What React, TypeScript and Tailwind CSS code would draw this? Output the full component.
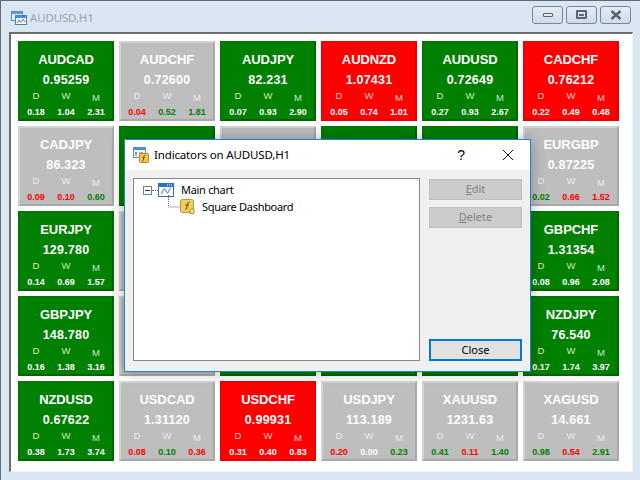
import React from 'react';

type Tone = 'green' | 'red' | 'gray';

interface TileData {
  tone: Tone;
  name?: string;
  price?: string;
  values?: [string, string, string];
  colors?: string;
}

const tiles: TileData[] = [
  { tone: 'green', name: 'AUDCAD', price: '0.95259', values: ['0.18', '1.04', '2.31'] },
  { tone: 'gray', name: 'AUDCHF', price: '0.72600', values: ['0.04', '0.52', '1.81'], colors: 'rgg' },
  { tone: 'green', name: 'AUDJPY', price: '82.231', values: ['0.07', '0.93', '2.90'] },
  { tone: 'red', name: 'AUDNZD', price: '1.07431', values: ['0.05', '0.74', '1.01'] },
  { tone: 'green', name: 'AUDUSD', price: '0.72649', values: ['0.27', '0.93', '2.67'] },
  { tone: 'red', name: 'CADCHF', price: '0.76212', values: ['0.22', '0.49', '0.48'] },

  { tone: 'gray', name: 'CADJPY', price: '86.323', values: ['0.09', '0.10', '0.60'], colors: 'rrg' },
  { tone: 'green' },
  { tone: 'gray' },
  { tone: 'green' },
  { tone: 'green' },
  { tone: 'gray', name: 'EURGBP', price: '0.87225', values: ['0.02', '0.66', '1.52'], colors: 'grr' },

  { tone: 'green', name: 'EURJPY', price: '129.780', values: ['0.14', '0.69', '1.57'] },
  { tone: 'gray' },
  { tone: 'gray' },
  { tone: 'green' },
  { tone: 'green' },
  { tone: 'green', name: 'GBPCHF', price: '1.31354', values: ['0.08', '0.96', '2.08'] },

  { tone: 'green', name: 'GBPJPY', price: '148.780', values: ['0.16', '1.38', '3.16'] },
  { tone: 'gray' },
  { tone: 'green' },
  { tone: 'green' },
  { tone: 'green' },
  { tone: 'green', name: 'NZDJPY', price: '76.540', values: ['0.17', '1.74', '3.97'] },

  { tone: 'green', name: 'NZDUSD', price: '0.67622', values: ['0.38', '1.73', '3.74'] },
  { tone: 'gray', name: 'USDCAD', price: '1.31120', values: ['0.08', '0.10', '0.36'], colors: 'rgr' },
  { tone: 'red', name: 'USDCHF', price: '0.99931', values: ['0.31', '0.40', '0.83'] },
  { tone: 'gray', name: 'USDJPY', price: '113.189', values: ['0.20', '0.00', '0.23'], colors: 'rwg' },
  { tone: 'gray', name: 'XAUUSD', price: '1231.63', values: ['0.41', '0.11', '1.40'], colors: 'grg' },
  { tone: 'gray', name: 'XAGUSD', price: '14.661', values: ['0.98', '0.54', '2.91'], colors: 'grg' },
];

const toneClass: Record<Tone, string> = {
  green: 'bg-[#008000] border-t-[#007800] border-l-[#007800] border-r-[#006400] border-b-[#006400]',
  red: 'bg-[#ff0000] border-t-[#f00000] border-l-[#f00000] border-r-[#e60000] border-b-[#e60000]',
  gray: 'bg-[#bebebe] border-t-[#d3d3d3] border-l-[#d3d3d3] border-r-[#a9a9a9] border-b-[#a9a9a9]',
};

const labelClass: Record<Tone, string[]> = {
  green: ['text-[#e2eeb0]', 'text-[#cdeeb8]', 'text-[#c0ecd8]'],
  red: ['text-[#ffc8c0]', 'text-[#ffc8c0]', 'text-[#ffc8c8]'],
  gray: ['text-[#ececec]', 'text-[#ececec]', 'text-[#ececec]'],
};

const valueClass: Record<string, string> = {
  r: 'text-[#ff0000]',
  g: 'text-[#008000]',
  w: 'text-white',
};

const Tile: React.FC<{ tile: TileData }> = ({ tile }) => (
  <div className={`h-20 border-2 flex flex-col items-center pt-[9px] font-['Liberation_Sans',sans-serif] text-white ${toneClass[tile.tone]}`}>
    {tile.name && (
      <>
        <div className="text-[13px] leading-[15px] font-bold tracking-[-0.1px]">{tile.name}</div>
        <div className="mt-[6px] text-[12.5px] leading-[15px] font-bold tracking-[0.2px]">{tile.price}</div>
        <div className="mt-[2px] w-full px-[1px] grid grid-cols-3 text-center text-[9.5px] leading-[11px]">
          <span className={labelClass[tile.tone][0]}>D</span>
          <span className={labelClass[tile.tone][1]}>W</span>
          <span className={`mt-[2px] ${labelClass[tile.tone][2]}`}>M</span>
        </div>
        <div className="mt-[4px] w-full px-[1px] grid grid-cols-3 text-center text-[9px] leading-[11px] font-bold">
          {tile.values?.map((v, i) => (
            <span key={i} className={tile.colors ? valueClass[tile.colors[i]] : 'text-white'}>{v}</span>
          ))}
        </div>
      </>
    )}
  </div>
);

const WinButton: React.FC<{ children: React.ReactNode }> = ({ children }) => (
  <div className="w-[31px] h-[18px] rounded-[3px] border border-[#76879c] bg-gradient-to-b from-[#e4edf6] to-[#cfdbe8] flex items-center justify-center">
    {children}
  </div>
);

const ChartIcon = () => (
  <svg width="16" height="16" viewBox="0 0 16 16" className="shrink-0">
    <rect x="0.5" y="1.5" width="11" height="9" fill="#e4eefa" stroke="#5b8fc7" />
    <rect x="1" y="2" width="10" height="2" fill="#5b9bd9" />
    <rect x="4.5" y="5.5" width="11" height="9" fill="#f6faff" stroke="#4a7fb8" />
    <rect x="5" y="6" width="10" height="2" fill="#4a8fd6" />
    <path d="M6 13l2-3 2 2 2-3 2 3" fill="none" stroke="#6b7f95" strokeWidth="1" />
  </svg>
);

const DialogIcon = () => (
  <svg width="16" height="16" viewBox="0 0 16 16" className="shrink-0">
    <rect x="0.5" y="0.5" width="12" height="10" fill="#eef4fb" stroke="#5b8fc7" />
    <rect x="1" y="1" width="11" height="2" fill="#4a8fd6" />
    <path d="M3 5v4M2 6h2M6 6h4M6 8h4" stroke="#607080" strokeWidth="1" />
    <rect x="6.5" y="6.5" width="9" height="9" rx="1" fill="#f2c94c" stroke="#b08a20" />
    <path d="M12.5 8.5c-1.5-.5-1.6.6-1.8 2l-.4 2.5c-.2 1-.8 1-1.3.8M9.500 10.500h2.500" fill="none" stroke="#6b5200" strokeWidth="1" />
  </svg>
);

const MainChartIcon = () => (
  <svg width="16" height="14" viewBox="0 0 16 14" className="shrink-0">
    <rect x="0.5" y="0.5" width="15" height="13" fill="#fff" stroke="#2f6fd0" />
    <rect x="1" y="1" width="14" height="3" fill="#2f6fd0" />
    <path d="M9 2h1M11 2h1M13 2h1" stroke="#fff" strokeWidth="1" />
    <path d="M3 11c1.500 0 1.500-5 3.500-5s1.500 4 3 4 1.500-5 3.500-5" fill="none" stroke="#8fa6c8" strokeWidth="1.500" />
  </svg>
);

const IndicatorIcon = () => (
  <svg width="16" height="16" viewBox="0 0 16 16" className="shrink-0">
    <rect x="0.5" y="0.5" width="13" height="13" rx="2" fill="#f0cd5c" stroke="#b8983a" />
    <path d="M9.500 3.500c-1.800-.6-2 .6-2.200 2l-.6 3.500c-.2 1.200-.8 1.300-1.500 1M5.500 6h3.500" fill="none" stroke="#5c4700" strokeWidth="1" />
    <path d="M12 9.500l2.500 2-1 3h-3l-1-3z" fill="#f6e08a" stroke="#a98a2c" />
  </svg>
);

const DialogButton: React.FC<{ first: string; rest: string }> = ({ first, rest }) => (
  <div className="h-[21px] bg-[#cccccc] border border-[#bfbfbf] flex items-center justify-center text-[11px] text-[#838383]">
    <span className="underline">{first}</span>
    {rest}
  </div>
);

export default function App() {
  return (
    <div className="relative w-[640px] h-[480px] overflow-hidden flex flex-col bg-[#dae6f2] border-t border-l border-[#5f6b78] font-['Noto_Sans',sans-serif]">
      {/* Title bar */}
      <div className="h-[31px] shrink-0 flex items-center pl-[10px] pr-[9px] pt-[2px]">
        <ChartIcon />
        <span className="ml-[3px] text-[11.5px] tracking-[-0.15px] text-[#9aa3ad]">AUDUSD,H1</span>
        <div className="ml-auto flex gap-[3px] -mt-[6px]">
          <WinButton>
            <div className="w-[10px] h-[4px] bg-[#e8e8e8] border border-[#5c6570] rounded-[1px]" />
          </WinButton>
          <WinButton>
            <div className="w-[11px] h-[9px] border-2 border-[#5c6570] rounded-[1px] flex items-center justify-center">
              <div className="w-[5px] h-[2px] bg-[#5c6570]" />
            </div>
          </WinButton>
          <WinButton>
            <svg width="12" height="10" viewBox="0 0 12 10">
              <path d="M1.500 1l9 8M10.500 1l-9 8" stroke="#5c6570" strokeWidth="2.500" />
            </svg>
          </WinButton>
        </div>
      </div>

      {/* Chart area */}
      <div className="ml-[8px] mr-[7px] mb-[8px] h-[441px] bg-white border-t-2 border-l-2 border-t-[#6d6d6d] border-l-[#6d6d6d] border-b border-r border-b-[#f4f4f4] border-r-[#f4f4f4] pl-[7px] pt-[7px]">
        <div className="grid grid-cols-[repeat(6,96px)] auto-rows-[80px] gap-[5px]">
          {tiles.map((t, i) => (
            <Tile key={i} tile={t} />
          ))}
        </div>
      </div>

      {/* Indicators dialog */}
      <div className="absolute left-[123px] top-[138px] w-[407px] h-[233px] flex flex-col bg-[#f0f0f0] border border-[#1a84d8] shadow-[0_0_14px_rgba(0,0,0,0.3)]">
        <div className="h-[30px] shrink-0 bg-white flex items-center pl-[8px] text-[#000]">
          <DialogIcon />
          <span className="ml-[5px] text-[11.5px] tracking-[-0.15px]">Indicators on AUDUSD,H1</span>
          <span className="ml-auto mr-[37px] text-[14px] font-['Liberation_Sans',sans-serif]">?</span>
          <svg width="12" height="12" viewBox="0 0 12 12" className="mr-[16px]">
            <path d="M1 1l10 10M11 1L1 11" stroke="#111" strokeWidth="1" />
          </svg>
        </div>
        <div className="flex-1 flex pt-[8px] pl-[8px] pr-[7px] pb-[10px] gap-[9px]">
          <div className="w-[287px] bg-white border border-[#828790] pt-[3px] pl-[9px] text-[11px] tracking-[-0.3px] text-[#000]">
            <div className="flex items-center h-[16px]">
              <div className="w-[9px] h-[9px] border border-[#808080] flex items-center justify-center">
                <div className="w-[5px] h-px bg-[#333]" />
              </div>
              <div className="w-[6px] border-t border-dotted border-[#666]" />
              <MainChartIcon />
              <span className="ml-[7px]">Main chart</span>
            </div>
            <div className="flex items-center h-[18px] ml-[25px]">
              <svg width="12" height="18" viewBox="0 0 12 18" className="shrink-0 -mt-[6px]">
                <path d="M0.500 0v12h12" fill="none" stroke="#666" strokeDasharray="1 1" />
              </svg>
              <IndicatorIcon />
              <span className="ml-[6px]">Square Dashboard</span>
            </div>
          </div>
          <div className="w-[93px] flex flex-col pt-px gap-[7px]">
            <DialogButton first="E" rest="dit" />
            <DialogButton first="D" rest="elete" />
            <div className="mt-auto h-[22px] bg-[#e1e1e1] border-2 border-[#0078d7] flex items-center justify-center text-[11px] text-[#000]">
              Close
            </div>
          </div>
        </div>
      </div>
    </div>
  );
}
